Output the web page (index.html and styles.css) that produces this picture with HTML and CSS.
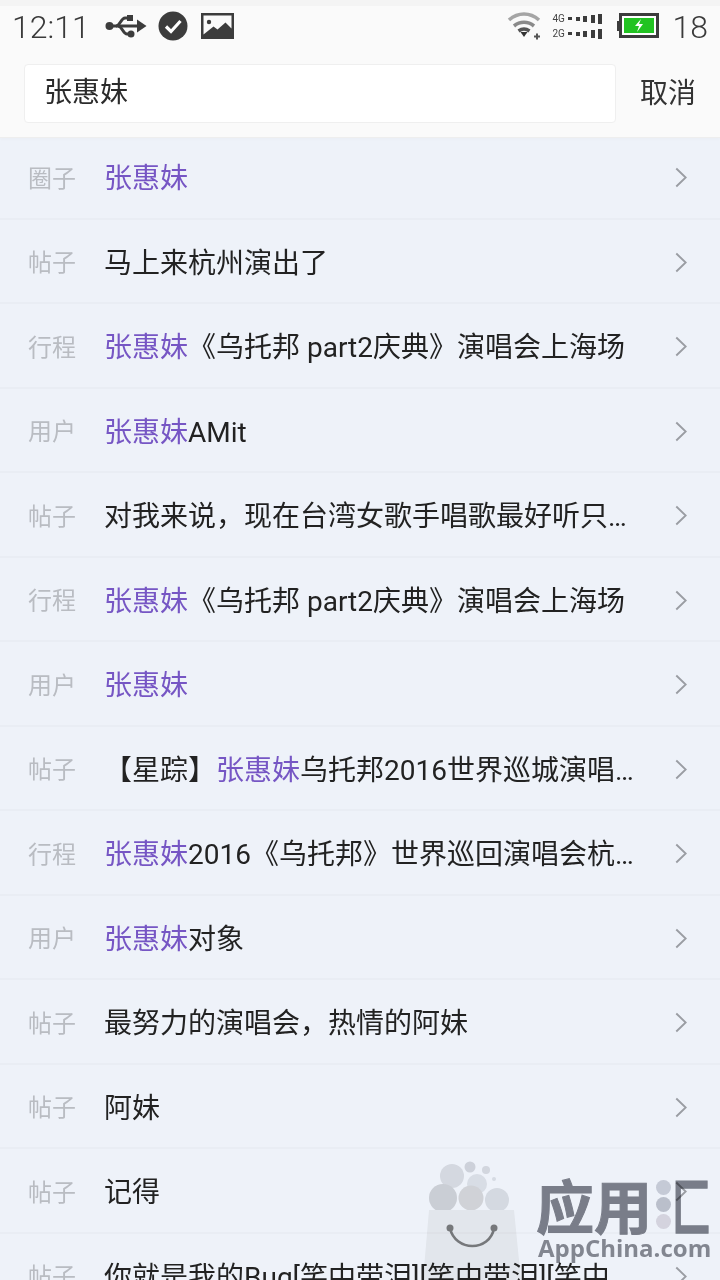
FILE: index.html
```html
<!DOCTYPE html>
<html lang="zh-CN">
<head>
<meta charset="utf-8">
<title>搜索</title>
<link rel="stylesheet" href="styles.css">
</head>
<body>
<div class="screen">
  <header class="header">
    <div class="status">
      <div class="status-left">
        <span class="time">12:11</span>
        <svg class="ic-usb" viewBox="0 0 42 26"><circle cx="4.500" cy="13" r="4" fill="#3c3c3c"/><path d="M4 13H34" stroke="#3c3c3c" stroke-width="3" fill="none"/><path d="M32 6.500l9.500 6.500-9.500 6.500z" fill="#3c3c3c"/><path d="M11 13c4 0 5-8 9-8h4M13 13c4 0 5 8 9 8h3" stroke="#3c3c3c" stroke-width="3" fill="none"/><rect x="22" y="2" width="6" height="6" fill="#3c3c3c"/><circle cx="26" cy="21" r="3.500" fill="#3c3c3c"/></svg>
        <svg class="ic-check" viewBox="0 0 30 30"><circle cx="15" cy="15" r="14.500" fill="#3c3c3c"/><path d="M8 15.500l5 5 9.500-10.500" stroke="#fff" stroke-width="3.200" fill="none"/></svg>
        <svg class="ic-image" viewBox="0 0 33 26"><rect width="33" height="26" fill="#3c3c3c"/><path d="M2.500 2.500h28v13l-6-6-8 7-4-3-10 8z" fill="#fafafa"/><circle cx="8" cy="9" r="2.200" fill="#3c3c3c"/></svg>
      </div>
      <div class="status-right">
        <svg class="ic-wifi" viewBox="0 0 34 28"><path d="M2 8c9-8 21-8 30 0" stroke="#a5a5a5" stroke-width="3.600" fill="none"/><path d="M7 14c6-5 14-5 20 0" stroke="#8a8a8a" stroke-width="3.600" fill="none"/><path d="M11.500 19c3.500-2.500 7.500-2.500 11 0" stroke="#555" stroke-width="3.400" fill="none"/><path d="M13.500 20h7l-3.500 5z" fill="#333"/><path d="M27 24.500h6M30 21.500v6" stroke="#555" stroke-width="2"/></svg>
        <div class="signal">
          <div class="sig-row"><span class="sig-label">4G</span><i class="b b1"></i><i class="b b2"></i><i class="b b3"></i><i class="b b4"></i><i class="b b5"></i></div>
          <div class="sig-row"><span class="sig-label">2G</span><i class="b b1"></i><i class="b b2"></i><i class="b b3"></i><i class="b b4"></i><i class="b b5"></i></div>
        </div>
        <svg class="ic-batt" viewBox="0 0 42 26"><rect x="0" y="8" width="3" height="10" fill="#3c3c3c"/><rect x="3.500" y="1.500" width="37" height="22" fill="#fff" stroke="#3c3c3c" stroke-width="3"/><rect x="7" y="5" width="30" height="15" fill="#22c322"/><path d="M24 6l-6 7h4l-2 6 6-8h-4l2-5z" fill="#fff"/></svg>
        <span class="batt-num">18</span>
      </div>
    </div>
    <div class="search">
      <div class="search-box">张惠妹</div>
      <span class="cancel">取消</span>
    </div>
  </header>
  <main class="list">
    <div class="row"><span class="tag">圈子</span><span class="txt"><em>张惠妹</em></span><svg class="chev" viewBox="0 0 14 24"><path d="M1.500 1.500l11 10.500-11 10.500"/></svg></div>
    <div class="row"><span class="tag">帖子</span><span class="txt">马上来杭州演出了</span><svg class="chev" viewBox="0 0 14 24"><path d="M1.500 1.500l11 10.500-11 10.500"/></svg></div>
    <div class="row"><span class="tag">行程</span><span class="txt"><em>张惠妹</em>《乌托邦 part2庆典》演唱会上海场</span><svg class="chev" viewBox="0 0 14 24"><path d="M1.500 1.500l11 10.500-11 10.500"/></svg></div>
    <div class="row"><span class="tag">用户</span><span class="txt"><em>张惠妹</em>AMit</span><svg class="chev" viewBox="0 0 14 24"><path d="M1.500 1.500l11 10.500-11 10.500"/></svg></div>
    <div class="row"><span class="tag">帖子</span><span class="txt">对我来说，现在台湾女歌手唱歌最好听只有张惠妹了吧</span><svg class="chev" viewBox="0 0 14 24"><path d="M1.500 1.500l11 10.500-11 10.500"/></svg></div>
    <div class="row"><span class="tag">行程</span><span class="txt"><em>张惠妹</em>《乌托邦 part2庆典》演唱会上海场</span><svg class="chev" viewBox="0 0 14 24"><path d="M1.500 1.500l11 10.500-11 10.500"/></svg></div>
    <div class="row"><span class="tag">用户</span><span class="txt"><em>张惠妹</em></span><svg class="chev" viewBox="0 0 14 24"><path d="M1.500 1.500l11 10.500-11 10.500"/></svg></div>
    <div class="row"><span class="tag">帖子</span><span class="txt">【星踪】<em>张惠妹</em>乌托邦2016世界巡城演唱会杭州站</span><svg class="chev" viewBox="0 0 14 24"><path d="M1.500 1.500l11 10.500-11 10.500"/></svg></div>
    <div class="row"><span class="tag">行程</span><span class="txt"><em>张惠妹</em>2016《乌托邦》世界巡回演唱会杭州站</span><svg class="chev" viewBox="0 0 14 24"><path d="M1.500 1.500l11 10.500-11 10.500"/></svg></div>
    <div class="row"><span class="tag">用户</span><span class="txt"><em>张惠妹</em>对象</span><svg class="chev" viewBox="0 0 14 24"><path d="M1.500 1.500l11 10.500-11 10.500"/></svg></div>
    <div class="row"><span class="tag">帖子</span><span class="txt">最努力的演唱会，热情的阿妹</span><svg class="chev" viewBox="0 0 14 24"><path d="M1.500 1.500l11 10.500-11 10.500"/></svg></div>
    <div class="row"><span class="tag">帖子</span><span class="txt">阿妹</span><svg class="chev" viewBox="0 0 14 24"><path d="M1.500 1.500l11 10.500-11 10.500"/></svg></div>
    <div class="row"><span class="tag">帖子</span><span class="txt">记得</span><svg class="chev" viewBox="0 0 14 24"><path d="M1.500 1.500l11 10.500-11 10.500"/></svg></div>
    <div class="row"><span class="tag">帖子</span><span class="txt">你就是我的Bug[笑中带泪][笑中带泪][笑中</span><svg class="chev" viewBox="0 0 14 24"><path d="M1.500 1.500l11 10.500-11 10.500"/></svg></div>
  </main>
  <div class="mark">
    <svg class="bag" viewBox="0 0 104 120">
      <circle cx="50" cy="7" r="5.500" fill="#dcdde0"/><circle cx="66" cy="10" r="4" fill="#e1e2e4"/><circle cx="74" cy="19" r="2" fill="#e6e7e9"/>
      <circle cx="32" cy="16" r="12" fill="#e4e4e6"/><circle cx="57" cy="24" r="10" fill="#e8e9eb"/>
      <circle cx="23" cy="38" r="14" fill="#d9d9da"/><circle cx="51" cy="38" r="12.500" fill="#dfdedd"/><circle cx="77" cy="40" r="12" fill="#e4e5e7"/>
      <path d="M9 50h85l7 70H3z" fill="#f3f3f2"/>
      <path d="M30 68c5 24 40 24 44 0" stroke="#7e7e7e" stroke-width="2.600" fill="none"/>
      <circle cx="30" cy="68" r="3.500" fill="#7e7e7e"/><circle cx="74" cy="68" r="3.500" fill="#7e7e7e"/>
    </svg>
    <div class="brand">
      <div class="brand-cn">应用<span class="dots"><i class="d1"></i><i class="d2"></i><i class="d3"></i></span><span class="brand-last">匚</span></div>
      <div class="brand-en">AppChina.com</div>
    </div>
  </div>
</div>
</body>
</html>
```
FILE: styles.css
```css
* { box-sizing: border-box; }
html, body { margin: 0; padding: 0; }
body {
  width: 720px;
  height: 1280px;
  overflow: hidden;
  background: #eef2f9;
  font-family: Roboto, "Noto Sans CJK SC", sans-serif;
}
.screen { position: relative; width: 720px; height: 1280px; overflow: hidden; }
.header {
  position: relative;
  height: 138px;
  background: #fafafa;
  border-top: 6px solid #f4f4f4;
  border-bottom: 1px solid #eeeeee;
  box-shadow: 0 2px 3px rgba(0, 0, 0, .015);
}
.status {
  height: 40px;
  display: flex;
  justify-content: space-between;
  align-items: center;
  padding: 0 12px;
}
.status-left, .status-right { display: flex; align-items: center; }
.time { font-size: 32px; font-weight: 300; color: #3a3a3a; width: 93px; padding-top: 2px; }
.ic-usb { width: 42px; height: 26px; }
.ic-check { width: 30px; height: 30px; margin-left: 11px; }
.ic-image { width: 33px; height: 26px; margin-left: 13px; }
.ic-wifi { width: 34px; height: 28px; margin-left: 1px; }
.signal { margin-left: 12px; display: flex; flex-direction: column; gap: 4px; width: 52px; }
.sig-row { display: flex; align-items: center; height: 11px; gap: 3.5px; }
.sig-label { font-size: 10px; line-height: 11px; color: #444; width: 13px; margin-right: -1px; }
.b { display: block; width: 4px; background: #3c3c3c; }
.b1 { height: 3px; } .b2 { height: 4px; } .b3 { height: 6px; } .b4 { height: 8px; } .b5 { height: 10px; }
.ic-batt { width: 42px; height: 26px; margin-left: 12px; }
.batt-num { font-size: 32px; font-weight: 300; color: #3a3a3a; margin-left: 14px; padding-top: 2px; }
.search {
  height: 59px;
  margin-top: 18px;
  padding: 0 24px;
  display: flex;
  align-items: center;
  justify-content: space-between;
}
.search-box {
  width: 592px;
  height: 59px;
  padding-left: 19px;
  background: #fff;
  border: 1px solid #efefef;
  border-radius: 4px;
  font-size: 28px;
  line-height: 56px;
  color: #2b2b2b;
}
.cancel { font-size: 28px; color: #333; padding-bottom: 5px; }
.list { display: flex; flex-direction: column; }
.row {
  flex: none;
  height: 84.5px;
  padding: 0 33px 0 28px;
  display: flex;
  align-items: center;
  border-bottom: 2px solid #e9edf4;
}
.row:first-child { height: 81.5px; padding-bottom: 3px; }
.tag { width: 77px; font-size: 24px; color: #b9bcc2; flex: none; }
.txt {
  width: 530px;
  margin-left: -1px;
  font-size: 28px;
  color: #222;
  white-space: nowrap;
  overflow: hidden;
  text-overflow: ellipsis;
}
.txt em { font-style: normal; color: #7656c4; }
.chev {
  width: 12px;
  height: 21px;
  margin-left: auto;
  margin-top: 3px;
  fill: none;
  stroke: #9a9da3;
  stroke-width: 2.200;
}
.mark {
  position: absolute;
  left: 420px;
  top: 1160px;
  width: 300px;
  display: flex;
  pointer-events: none;
  mix-blend-mode: multiply;
}
.bag { width: 104px; height: 120px; flex: none; }
.brand { margin-left: 12px; margin-top: 14px; flex: none; width: 184px; }
.brand-cn {
  display: flex;
  align-items: center;
  white-space: nowrap;
  font-size: 58px;
  line-height: 60px;
  font-weight: 700;
  color: #82848c;
  -webkit-text-stroke: 1px #82848c;
  font-family: "Noto Sans CJK SC", sans-serif;
}
.dots { display: flex; flex-direction: column; gap: 2px; width: 20px; margin-left: 4px; flex: none; }
.dots i { display: block; width: 15px; height: 15px; border-radius: 50%; }
.d1 { background: #d3d5dc; } .d2 { background: #c8cad0; } .d3 { background: #e4dfe4; }
.brand-last { font-size: 46px; margin-left: -4px; transform: scale(.85, 1.35); transform-origin: left center; }
.brand-en {
  padding-left: 2px;
  font-size: 24px;
  line-height: 28px;
  font-weight: 700;
  white-space: nowrap;
  color: #8b8d94;
  font-family: "Open Sans", sans-serif;
}
```
